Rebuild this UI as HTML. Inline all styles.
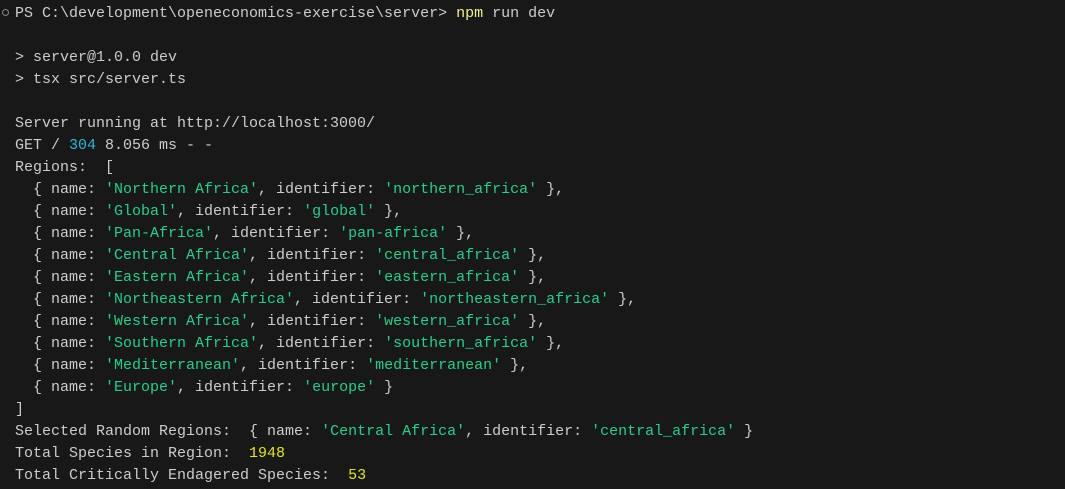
<!DOCTYPE html>
<html><head><meta charset="utf-8"><style>
html,body{margin:0;padding:0;background:#181818;width:1065px;height:489px;overflow:hidden}
pre{margin:0;position:absolute;left:15px;top:2.5px;font-family:"Liberation Mono",monospace;font-size:15px;line-height:22px;color:#cccccc}
.g{color:#23d18b}.y{color:#e5e510}.c{color:#29b8db}.n{color:#f1f18c}
.dot{position:absolute;left:2px;top:9px;width:5px;height:5px;border:1.5px solid #888;border-radius:50%}
</style></head><body>
<div class="dot"></div>
<pre>PS C:\development\openeconomics-exercise\server&gt; <span class="n">npm</span> run dev

&gt; server@1.0.0 dev
&gt; tsx src/server.ts

Server running at http://localhost:3000/
GET / <span class="c">304</span> 8.056 ms - -
Regions:  [
  { name: <span class="g">'Northern Africa'</span>, identifier: <span class="g">'northern_africa'</span> },
  { name: <span class="g">'Global'</span>, identifier: <span class="g">'global'</span> },
  { name: <span class="g">'Pan-Africa'</span>, identifier: <span class="g">'pan-africa'</span> },
  { name: <span class="g">'Central Africa'</span>, identifier: <span class="g">'central_africa'</span> },
  { name: <span class="g">'Eastern Africa'</span>, identifier: <span class="g">'eastern_africa'</span> },
  { name: <span class="g">'Northeastern Africa'</span>, identifier: <span class="g">'northeastern_africa'</span> },
  { name: <span class="g">'Western Africa'</span>, identifier: <span class="g">'western_africa'</span> },
  { name: <span class="g">'Southern Africa'</span>, identifier: <span class="g">'southern_africa'</span> },
  { name: <span class="g">'Mediterranean'</span>, identifier: <span class="g">'mediterranean'</span> },
  { name: <span class="g">'Europe'</span>, identifier: <span class="g">'europe'</span> }
]
Selected Random Regions:  { name: <span class="g">'Central Africa'</span>, identifier: <span class="g">'central_africa'</span> }
Total Species in Region:  <span class="y">1948</span>
Total Critically Endagered Species:  <span class="y">53</span></pre>
</body></html>
